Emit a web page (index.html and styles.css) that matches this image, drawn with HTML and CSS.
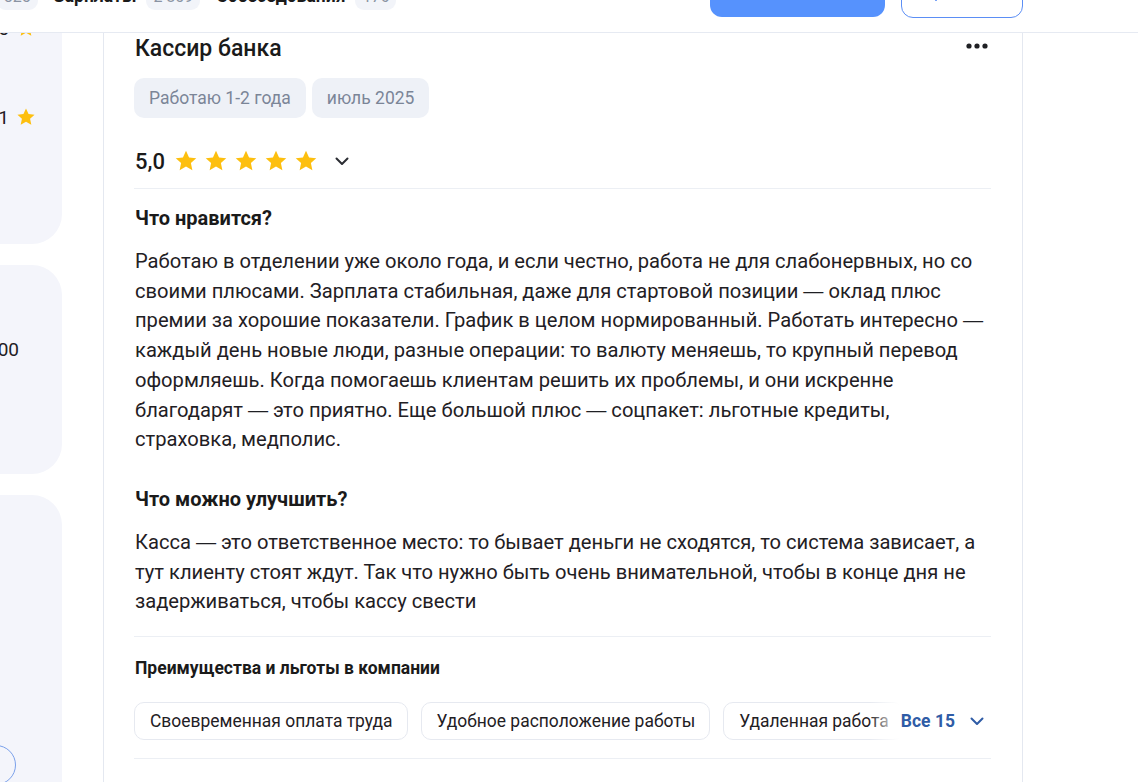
FILE: index.html
```html
<!DOCTYPE html>
<html lang="ru">
<head>
<meta charset="utf-8">
<title>Отзывы — Кассир банка</title>
<link rel="stylesheet" href="styles.css">
</head>
<body>
<header class="topbar">
  <div class="topbar-inner">
    <nav class="tabs">
      <a class="tab"><span class="tab-label">Отзывы</span><span class="tab-count">325</span></a>
      <a class="tab"><span class="tab-label">Зарплаты</span><span class="tab-count">2 809</span></a>
      <a class="tab"><span class="tab-label">Собеседования</span><span class="tab-count">176</span></a>
    </nav>
    <div class="actions">
      <button class="btn btn-primary">Оставить отзыв</button>
      <button class="btn btn-outline" aria-label="Добавить">
        <svg class="plus" width="16" height="16" viewBox="0 0 16 16"><path d="M8 1v14M1 8h14" stroke="#5b8ef5" stroke-width="1.6" fill="none"/></svg>
      </button>
    </div>
  </div>
</header>

<main class="layout">
  <aside class="sidebar">
    <section class="side-card side-card--ratings">
      <div class="side-row"><span class="side-label">Зарплата</span><span class="side-value">4,5<svg class="side-star" width="20" height="20" viewBox="0 0 24 24"><path class="star" d="M12 1.8l3.05 6.6 7.2.8-5.37 4.9 1.5 7.1L12 17.6l-6.38 3.6 1.5-7.1L1.75 9.2l7.2-.8z"/></svg></span></div>
      <div class="side-row side-row--second"><span class="side-label">Руководство</span><span class="side-value">4,1<svg class="side-star" width="20" height="20" viewBox="0 0 24 24"><path class="star" d="M12 1.8l3.05 6.6 7.2.8-5.37 4.9 1.5 7.1L12 17.6l-6.38 3.6 1.5-7.1L1.75 9.2l7.2-.8z"/></svg></span></div>
    </section>
    <section class="side-card side-card--salary">
      <div class="side-salary">до 90 000</div>
    </section>
    <section class="side-card side-card--more">
      <div class="side-avatar-row"><span class="side-avatar"></span></div>
    </section>
  </aside>

  <article class="review">
    <div class="review-head">
      <h2 class="review-title">Кассир банка</h2>
      <svg class="dots" width="28" height="6" viewBox="0 0 28 6"><circle cx="6" cy="3" r="2.6" fill="#1f2024"/><circle cx="14" cy="3" r="2.6" fill="#1f2024"/><circle cx="22" cy="3" r="2.6" fill="#1f2024"/></svg>
    </div>
    <div class="tags">
      <span class="tag">Работаю 1-2 года</span>
      <span class="tag">июль 2025</span>
    </div>
    <div class="rating">
      <span class="rating-value">5,0</span>
      <span class="stars">
        <svg width="24" height="24" viewBox="0 0 24 24"><path class="star" d="M12 1.8l3.05 6.6 7.2.8-5.37 4.9 1.5 7.1L12 17.6l-6.38 3.6 1.5-7.1L1.75 9.2l7.2-.8z"/></svg>
        <svg width="24" height="24" viewBox="0 0 24 24"><path class="star" d="M12 1.8l3.05 6.6 7.2.8-5.37 4.9 1.5 7.1L12 17.6l-6.38 3.6 1.5-7.1L1.75 9.2l7.2-.8z"/></svg>
        <svg width="24" height="24" viewBox="0 0 24 24"><path class="star" d="M12 1.8l3.05 6.6 7.2.8-5.37 4.9 1.5 7.1L12 17.6l-6.38 3.6 1.5-7.1L1.75 9.2l7.2-.8z"/></svg>
        <svg width="24" height="24" viewBox="0 0 24 24"><path class="star" d="M12 1.8l3.05 6.6 7.2.8-5.37 4.9 1.5 7.1L12 17.6l-6.38 3.6 1.5-7.1L1.75 9.2l7.2-.8z"/></svg>
        <svg width="24" height="24" viewBox="0 0 24 24"><path class="star" d="M12 1.8l3.05 6.6 7.2.8-5.37 4.9 1.5 7.1L12 17.6l-6.38 3.6 1.5-7.1L1.75 9.2l7.2-.8z"/></svg>
      </span>
      <svg class="chevron" width="16" height="16" viewBox="0 0 16 16"><path d="M2.5 5.5L8 11l5.5-5.5" stroke="#2b2d33" stroke-width="2" fill="none" stroke-linecap="round" stroke-linejoin="round"/></svg>
    </div>
    <div class="divider divider--rating"></div>

    <h3 class="section-title">Что нравится?</h3>
    <p class="text">Работаю в отделении уже около года, и если честно, работа не для слабонервных, но со своими плюсами. Зарплата стабильная, даже для стартовой позиции <span class="dash">—</span> оклад плюс премии за хорошие показатели. График в целом нормированный. Работать интересно <span class="dash">—</span> каждый день новые люди, разные операции: то валюту меняешь, то крупный перевод оформляешь. Когда помогаешь клиентам решить их проблемы, и они искренне благодарят <span class="dash">—</span> это приятно. Еще большой плюс <span class="dash">—</span> соцпакет: льготные кредиты, страховка, медполис.</p>

    <h3 class="section-title section-title--second">Что можно улучшить?</h3>
    <p class="text">Касса <span class="dash">—</span> это ответственное место: то бывает деньги не сходятся, то система зависает, а тут клиенту стоят ждут. Так что нужно быть очень внимательной, чтобы в конце дня не задерживаться, чтобы кассу свести</p>

    <div class="divider divider--text"></div>

    <h4 class="benefits-title">Преимущества и льготы в компании</h4>
    <div class="chips-row">
      <span class="chip">Своевременная оплата труда</span>
      <span class="chip">Удобное расположение работы</span>
      <span class="chip">Удаленная работа</span>
      <span class="chip">Корпоративное обучение</span>
      <button class="more">Все 15
        <svg width="16" height="16" viewBox="0 0 16 16"><path d="M2.5 5.5L8 11l5.5-5.5" stroke="#2f5ca6" stroke-width="2" fill="none" stroke-linecap="round" stroke-linejoin="round"/></svg>
      </button>
    </div>
    <div class="divider divider--bottom"></div>
  </article>
</main>
</body>
</html>
```

FILE: styles.css
```css
* { box-sizing: border-box; }

body {
  margin: 0;
  font-family: Roboto, "Noto Sans", "Liberation Sans", sans-serif;
  color: #1f2024;
  background: #fff;
  overflow: hidden;
}

/* Sticky top bar (scrolled: only its lower edge is visible) */
.topbar {
  position: fixed;
  top: 0;
  left: 0;
  right: 0;
  height: 33px;
  background: #fff;
  border-bottom: 1px solid #e6eaf2;
  overflow: hidden;
  z-index: 10;
}

.topbar-inner {
  display: flex;
  align-items: center;
  height: 80px;
  margin: -46px 115px 0 -82px;
}

.tabs {
  display: flex;
  gap: 16px;
  padding-top: 4px;
}

.tab {
  display: flex;
  align-items: center;
  gap: 10px;
  font-size: 17.5px;
  font-weight: 700;
  color: #1a1a1a;
}

.tab-count {
  display: flex;
  align-items: center;
  height: 28px;
  padding: 0 7px;
  border-radius: 9px;
  background: #f2f4f9;
  color: #8a93a3;
  font-size: 16px;
  font-weight: 400;
}

.actions {
  margin-left: auto;
  display: flex;
  align-items: center;
  gap: 16px;
}

.btn {
  display: flex;
  align-items: center;
  justify-content: center;
  font-family: inherit;
  font-size: 16px;
  font-weight: 500;
  border-radius: 12px;
}

.btn-primary {
  width: 175px;
  height: 46px;
  border: 0;
  background: #5692fd;
  color: #fff;
}

.btn-outline {
  width: 122px;
  height: 48px;
  border: 1px solid #5b8ef5;
  background: #fff;
  justify-content: flex-start;
  padding-left: 26px;
}

/* Page layout */
.layout {
  display: flex;
  align-items: flex-start;
  gap: 41px;
  margin: -14px 115px 0 -218px;
}

.sidebar {
  width: 280px;
  flex: none;
  display: flex;
  flex-direction: column;
  gap: 21px;
}

.side-card {
  background: #f4f5fb;
  border-radius: 30px;
  padding: 0 26px 0 24px;
}

.side-card--ratings { height: 258px; padding-top: 27px; }
.side-card--salary { height: 209px; padding-top: 70px; padding-right: 27px; }
.side-card--more { height: 420px; padding-top: 250px; padding-right: 27px; }

.side-row {
  display: flex;
  justify-content: space-between;
  align-items: center;
  height: 30px;
  font-size: 19px;
  color: #1f2024;
}

.side-value {
  display: flex;
  align-items: center;
}

.side-row--second { margin-top: 59px; }

.side-star { margin-left: 7px; }

.side-salary {
  text-align: right;
  padding-right: 16px;
  font-size: 19px;
  line-height: 30px;
}

.side-avatar-row {
  display: flex;
  justify-content: flex-end;
  padding-right: 19px;
}

.side-avatar {
  width: 40px;
  height: 40px;
  border-radius: 50%;
  border: 1px solid #7aa0ea;
}

/* Review card */
.review {
  flex: 1;
  min-width: 0;
  background: #fff;
  border: 1px solid #e4e8f0;
  border-radius: 24px;
  padding: 48px 31px 120px 30px;
}

.review-head {
  display: flex;
  justify-content: space-between;
  align-items: flex-start;
}

.review-title {
  margin: 0 0 0 1px;
  font-size: 23px;
  line-height: 28px;
  font-weight: 500;
  color: #1a1a1a;
}

.dots { margin-top: 8px; }

.tags {
  display: flex;
  gap: 6px;
  margin-top: 15px;
}

.tag {
  display: flex;
  align-items: center;
  height: 40px;
  padding: 0 15px;
  border-radius: 10px;
  background: #eef1f7;
  color: #7b8597;
  font-size: 17.5px;
}

.rating {
  display: flex;
  align-items: center;
  height: 28px;
  margin-top: 29px;
  padding-left: 1px;
}

.rating-value {
  font-size: 22px;
  font-weight: 500;
  margin-right: 9px;
  color: #1a1a1a;
}

.stars {
  display: flex;
  gap: 6px;
}

.star { fill: #fdbf0f; }

.chevron { margin-left: 16px; }

.divider {
  height: 1px;
  background: #eceff4;
}

.divider--rating { margin-top: 13px; }
.divider--text { margin-top: 19px; }
.divider--bottom { margin-top: 18px; }

.section-title {
  margin: 16px 0 0 1px;
  font-size: 20px;
  line-height: 26px;
  font-weight: 700;
  color: #1a1a1a;
}

.section-title--second { margin-top: 31px; }

.text {
  margin: 16px 0 0 1px;
  font-size: 20.15px;
  line-height: 29.7px;
  color: #1f2024;
}

.dash { font-family: "Liberation Sans", Arial, sans-serif; }

.benefits-title {
  margin: 19px 0 0 1px;
  font-size: 17.5px;
  line-height: 24px;
  font-weight: 700;
  color: #1a1a1a;
}

.chips-row {
  position: relative;
  display: flex;
  gap: 13px;
  margin-top: 22px;
  overflow: hidden;
}

.chip {
  flex: none;
  display: flex;
  align-items: center;
  height: 38px;
  padding: 0 14px 0 15px;
  border: 1px solid #e6e9f0;
  border-radius: 10px;
  font-size: 17.45px;
  color: #1f2024;
}

.more {
  position: absolute;
  top: 0;
  right: 0;
  bottom: 0;
  display: flex;
  align-items: center;
  gap: 14px;
  padding: 0 6px 0 32px;
  border: 0;
  background: linear-gradient(to right, rgba(255, 255, 255, 0), #fff 30px);
  font-family: inherit;
  font-size: 17.5px;
  font-weight: 700;
  color: #2f5ca6;
}
```
